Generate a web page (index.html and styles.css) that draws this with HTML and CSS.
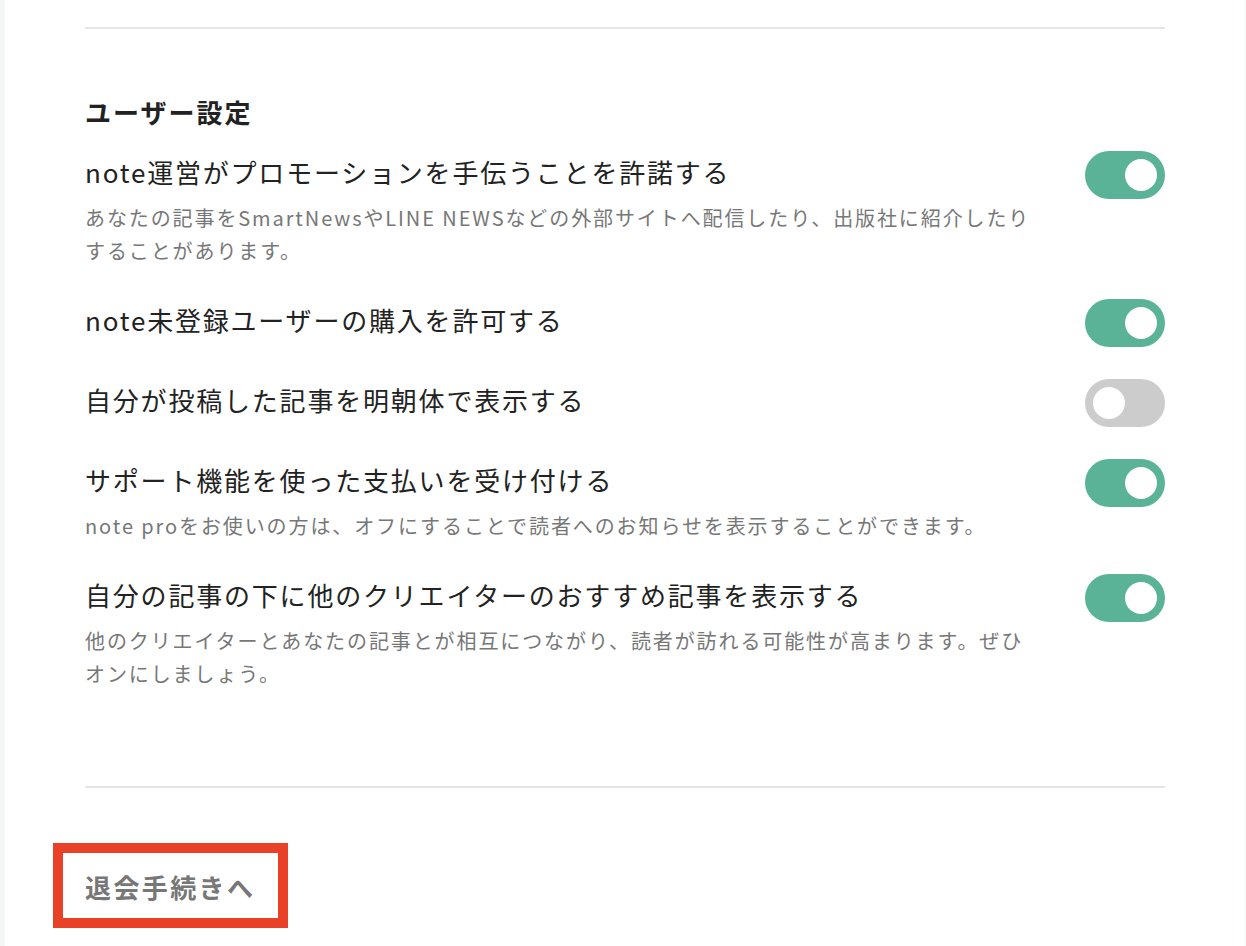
FILE: index.html
```html
<!DOCTYPE html>
<html lang="ja">
<head>
<meta charset="utf-8">
<title>ユーザー設定</title>
<link rel="stylesheet" href="styles.css">
</head>
<body>
<div class="panel">
  <hr class="rule">

  <h2 class="section-title">ユーザー設定</h2>

  <ul class="settings">
    <li class="setting">
      <div class="setting-text">
        <p class="setting-label">note運営がプロモーションを手伝うことを許諾する</p>
        <p class="setting-desc">あなたの記事をSmartNewsやLINE NEWSなどの外部サイトへ配信したり、出版社に紹介したりすることがあります。</p>
      </div>
      <span class="toggle on"><span class="knob"></span></span>
    </li>
    <li class="setting">
      <div class="setting-text">
        <p class="setting-label">note未登録ユーザーの購入を許可する</p>
      </div>
      <span class="toggle on"><span class="knob"></span></span>
    </li>
    <li class="setting">
      <div class="setting-text">
        <p class="setting-label">自分が投稿した記事を明朝体で表示する</p>
      </div>
      <span class="toggle"><span class="knob"></span></span>
    </li>
    <li class="setting">
      <div class="setting-text">
        <p class="setting-label">サポート機能を使った支払いを受け付ける</p>
        <p class="setting-desc">note proをお使いの方は、オフにすることで読者へのお知らせを表示することができます。</p>
      </div>
      <span class="toggle on"><span class="knob"></span></span>
    </li>
    <li class="setting">
      <div class="setting-text">
        <p class="setting-label">自分の記事の下に他のクリエイターのおすすめ記事を表示する</p>
        <p class="setting-desc">他のクリエイターとあなたの記事とが相互につながり、読者が訪れる可能性が高まります。ぜひオンにしましょう。</p>
      </div>
      <span class="toggle on"><span class="knob"></span></span>
    </li>
  </ul>

  <hr class="rule rule-bottom">

  <div class="leave">
    <a class="leave-link" href="#">退会手続きへ</a>
  </div>
</div>
</body>
</html>
```

FILE: styles.css
```css
body {
  margin: 0;
  background-color: #f5f7f7;
  font-family: "Noto Sans CJK JP", "Noto Sans", sans-serif;
  color: #222;
}

.panel {
  margin-left: 5px;
  width: 1240px;
  min-height: 946px;
  background-color: white;
  padding: 27px 80px 0 80px;
  box-sizing: border-box;
}

.rule {
  margin: 0;
  width: 1080px;
  height: 2px;
  border: none;
  background-color: #e6e6e6;
}

.rule-bottom {
  margin-top: 96px;
}

.section-title {
  margin: 63px 0 0 0;
  font-size: 26px;
  line-height: 40px;
  font-weight: bold;
  letter-spacing: 2px;
}

.settings {
  list-style: none;
  margin: 19px 0 0 0;
  padding: 0;
  width: 1080px;
  display: flex;
  flex-direction: column;
  gap: 32px;
}

.setting {
  display: flex;
  justify-content: space-between;
  align-items: flex-start;
}

.setting-text {
  width: 955px;
}

.setting-label {
  margin: 0;
  font-size: 26px;
  line-height: 42px;
  height: 48px;
  letter-spacing: 1.8px;
}

.setting-desc {
  margin: 0;
  padding-top: 2px;
  font-size: 20px;
  line-height: 33px;
  letter-spacing: 1.9px;
  color: #777;
}

.toggle {
  flex: none;
  display: flex;
  justify-content: flex-start;
  align-items: center;
  width: 80px;
  height: 48px;
  padding: 0 8px;
  box-sizing: border-box;
  border-radius: 24px;
  background-color: #cccccc;
}

.toggle.on {
  justify-content: flex-end;
  background-color: #5ab297;
}

.knob {
  width: 32px;
  height: 32px;
  border-radius: 50%;
  background-color: white;
}

.leave {
  margin-top: 55px;
}

.leave-link {
  display: inline-block;
  margin-left: -32px;
  padding: 14px 23px 11px 22px;
  border: 10px solid #e94128;
  font-size: 26px;
  line-height: 40px;
  font-weight: bold;
  letter-spacing: 2.4px;
  color: #777;
  text-decoration: none;
}
```
